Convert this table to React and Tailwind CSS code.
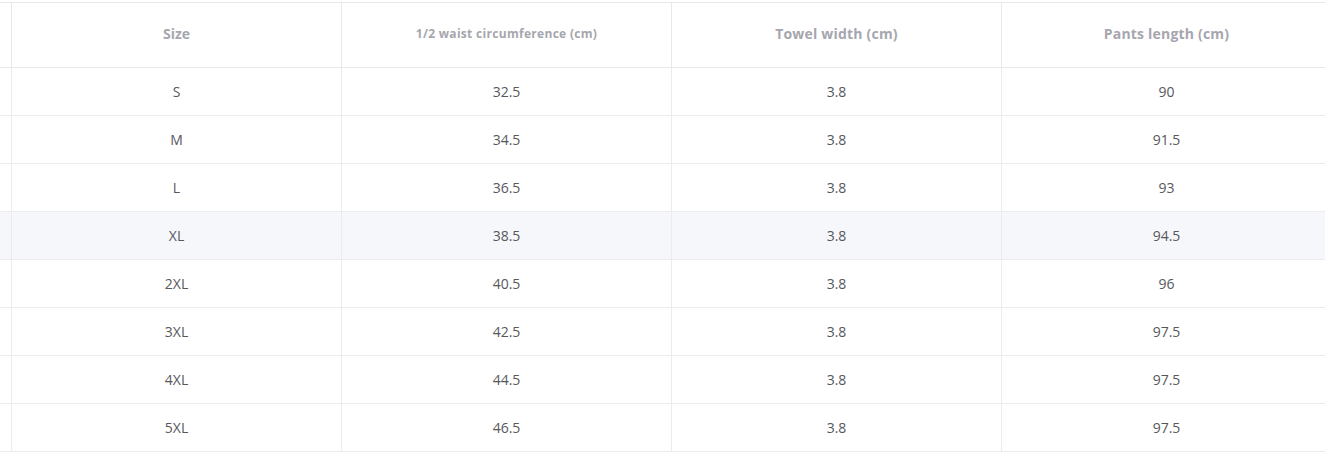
const headers = [
  { label: "Size", cls: "text-[14px]" },
  { label: "1/2 waist circumference (cm)", cls: "text-[12px] tracking-[0.3px]" },
  { label: "Towel width (cm)", cls: "text-[14px] tracking-[0.2px]" },
  { label: "Pants length (cm)", cls: "text-[14px] tracking-[0.2px]" },
];

const rows = [
  ["S", "32.5", "3.8", "90"],
  ["M", "34.5", "3.8", "91.5"],
  ["L", "36.5", "3.8", "93"],
  ["XL", "38.5", "3.8", "94.5"],
  ["2XL", "40.5", "3.8", "96"],
  ["3XL", "42.5", "3.8", "97.5"],
  ["4XL", "44.5", "3.8", "97.5"],
  ["5XL", "46.5", "3.8", "97.5"],
];

export default function App() {
  return (
    <div
      className="w-[1325px] h-[470px] overflow-hidden bg-white pt-[2px]"
      style={{ fontFamily: '"Open Sans", "Noto Sans", sans-serif' }}
    >
      <div className="grid grid-cols-[11px_330px_330px_330px_330px] w-[1331px] border-t border-[#e8e8ea]">
        {/* Header */}
        <div className="h-[65px] border-b border-[#e8e8ea]" />
        {headers.map((h) => (
          <div
            key={h.label}
            className={`h-[65px] pb-[3px] flex items-center justify-center border-b border-l border-[#e8e8ea] font-bold text-[#a6a6ae] ${h.cls}`}
          >
            {h.label}
          </div>
        ))}

        {/* Body */}
        {rows.map((r, i) => {
          const bg = r[0] === "XL" ? "bg-[#f6f7fa]" : "bg-white";
          return [
            <div key={`e${i}`} className={`h-[48px] border-b border-[#ececee] ${bg}`} />,
            ...r.map((v, j) => (
              <div
                key={`${i}-${j}`}
                className={`h-[48px] flex items-center justify-center border-b border-l border-[#ececee] text-[14px] text-[#58585c] ${bg}`}
              >
                {v}
              </div>
            )),
          ];
        })}
      </div>
    </div>
  );
}
